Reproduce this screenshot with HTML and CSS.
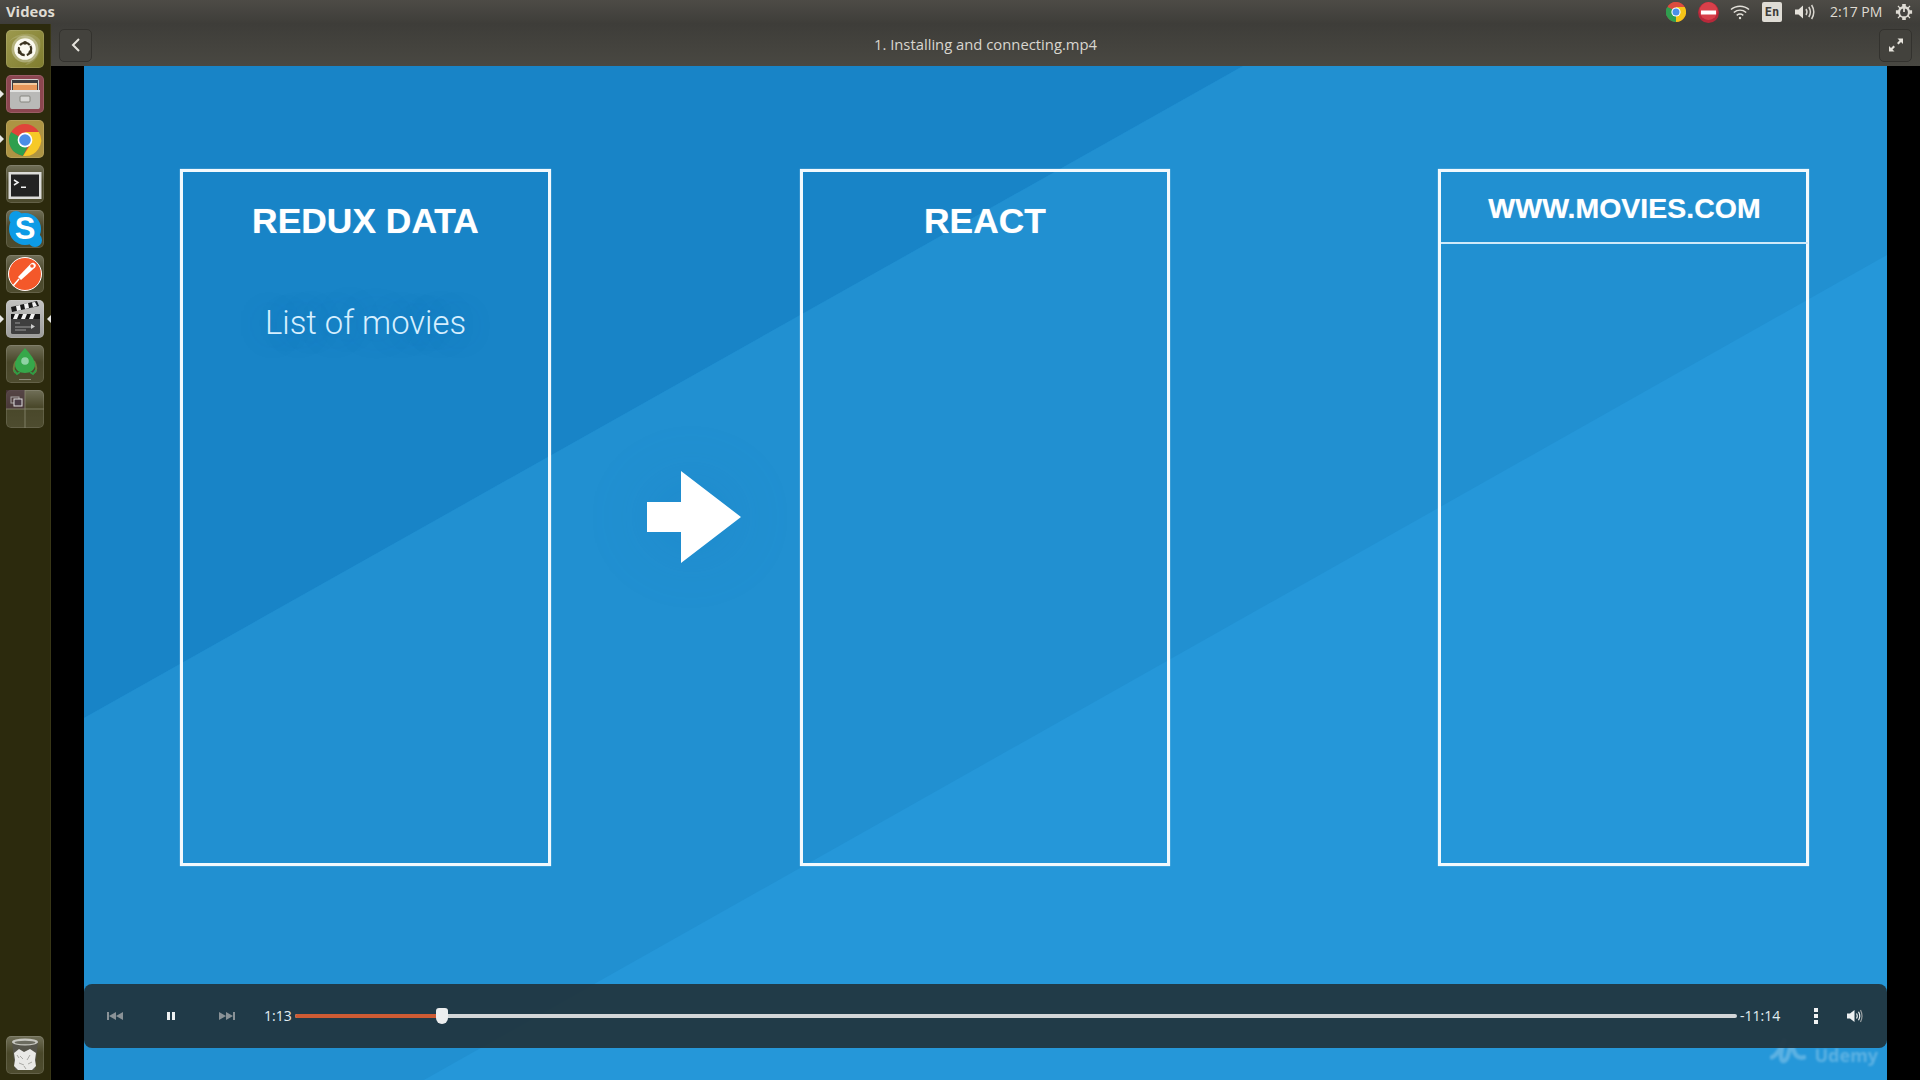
FILE: index.html
```html
<!DOCTYPE html>
<html lang="en">
<head>
<meta charset="utf-8">
<title>Videos</title>
<link rel="stylesheet" href="styles.css">
</head>
<body>
<header class="panel">
  <span class="app-name">Videos</span>
  <div class="indicators">
    <svg class="ind ind-chrome" viewBox="0 0 20 20"><circle cx="10" cy="10" r="10" fill="#dd4b3e"/><path d="M10 10 1.34 15 A10 10 0 0 1 1.34 5 L5 10Z" fill="#2f9e4f"/><path d="M1.34 5A10 10 0 0 0 10 20L15 11Z" fill="#2f9e4f"/><path d="M10 20A10 10 0 0 0 18.7 5H10Z" fill="#f5c518"/><path d="M1.6 4.6A10 10 0 0 1 18.7 5H10Z" fill="#dd4b3e"/><circle cx="10" cy="10" r="4.6" fill="#fff"/><circle cx="10" cy="10" r="3.5" fill="#4a8fe7"/></svg>
    <svg class="ind ind-stop" viewBox="0 0 21 21"><circle cx="10.500" cy="10.500" r="10.500" fill="#b8283a"/><circle cx="10.500" cy="9" r="9" fill="#d8404a"/><rect x="3" y="8.500" width="15" height="4" fill="#fff"/></svg>
    <svg class="ind ind-wifi" viewBox="0 0 20 16" fill="none" stroke="#e4e1da" stroke-width="1.500"><path d="M1 5.500C6 1 14 1 19 5.500"/><path d="M3.800 8.500C7.500 5.500 12.500 5.500 16.200 8.500"/><path d="M6.700 11.300C8.700 9.800 11.300 9.800 13.300 11.300"/><circle cx="10" cy="14" r="1.200" fill="#e4e1da" stroke="none"/></svg>
    <span class="ind-lang">En</span>
    <svg class="ind ind-vol" viewBox="0 0 21 16" fill="none" stroke="#d8d5ce" stroke-width="1.500"><path d="M0 5.500H3.500L8 1.500V14.500L3.500 10.500H0Z" fill="#e4e1da" stroke="none"/><path d="M11 5Q13 8 11 11"/><path d="M13.800 3Q17 8 13.800 13"/><path d="M16.600 1Q21 8 16.600 15"/></svg>
    <span class="clock">2:17 PM</span>
    <svg class="ind ind-gear" viewBox="0 0 20 20"><path d="M8 1H12V3.600L14.400 4.600 16.200 2.800 17.200 3.800 15.400 5.600 16.400 8H19V12H16.400L15.400 14.400 17.200 16.200 16.200 17.200 14.400 15.400 12 16.400V19H8V16.400L5.600 15.400 3.800 17.200 2.800 16.200 4.600 14.400 3.600 12H1V8H3.600L4.600 5.600 2.800 3.800 3.800 2.800 5.600 4.600 8 3.600Z" fill="#dedbd4"/><circle cx="10" cy="10.500" r="4.300" fill="#444340"/><rect x="9" y="4" width="2" height="6" fill="#dedbd4"/></svg>
  </div>
</header>

<div class="main">
  <nav class="launcher">
    <div class="tile tile-dash">
      <svg viewBox="0 0 38 38"><path d="M3 12C10 2 28 1 34 10 36 22 30 34 19 35 28 28 30 18 24 11 17 5 8 7 3 12Z" fill="#fff" opacity=".14"/><circle cx="19" cy="19" r="13.500" fill="#fff" opacity=".3"/><circle cx="19" cy="19" r="10.800" fill="#fbfaf0"/><circle cx="19" cy="19" r="6.200" fill="none" stroke="#3c3420" stroke-width="2.200" stroke-dasharray="11 2" transform="rotate(-30 19 19)"/><circle cx="19" cy="12.800" r="1.900" fill="#3c3420"/><circle cx="13.600" cy="22.100" r="1.900" fill="#3c3420"/><circle cx="24.400" cy="22.100" r="1.900" fill="#3c3420"/></svg>
    </div>
    <div class="tile tile-files pip-left">
      <svg viewBox="0 0 38 38"><rect x="5" y="4" width="28" height="30" rx="2" fill="#d3d3d0"/><rect x="6" y="5" width="26" height="11" fill="#3b3b3f"/><rect x="7" y="10" width="24" height="5" fill="#e8965a"/><rect x="7" y="8" width="24" height="2" fill="#f3c9a0"/><rect x="4" y="15" width="30" height="19" rx="2" fill="#b9b9b7"/><rect x="4" y="15" width="30" height="2" fill="#e2e2e0"/><rect x="14" y="21" width="10" height="6" rx="1" fill="#d8d8d6" stroke="#85857f"/></svg>
    </div>
    <div class="tile tile-chrome pip-left">
      <svg viewBox="0 0 38 38"><circle cx="19" cy="20" r="16" fill="#e0443a"/><path d="M5.100 12A16 16 0 0 0 17 35.900L24 22 12 16Z" fill="#2e9f4e"/><path d="M17 35.900A16 16 0 0 0 32.900 12H19L26 22Z" fill="#f6c927"/><circle cx="19" cy="20" r="7.400" fill="#fff"/><circle cx="19" cy="20" r="5.800" fill="#4b8de6"/></svg>
    </div>
    <div class="tile tile-term">
      <svg viewBox="0 0 38 38"><rect x="2.500" y="7" width="33" height="27" fill="#dcdcd9"/><rect x="5" y="9.500" width="28" height="22" fill="#222"/><path d="M8 15 12 17.500 8 20" fill="none" stroke="#f2f2f2" stroke-width="1.500"/><rect x="15" y="21.500" width="5" height="1.500" fill="#f2f2f2"/></svg>
    </div>
    <div class="tile tile-skype">
      <svg viewBox="0 0 38 38"><circle cx="10" cy="8" r="7" fill="#0d9be6"/><circle cx="29" cy="30" r="7" fill="#0d9be6"/><circle cx="19" cy="19" r="16" fill="#0d9be6"/></svg>
      <span class="skype-s">S</span>
    </div>
    <div class="tile tile-post">
      <svg viewBox="0 0 38 38"><circle cx="19" cy="19" r="16.500" fill="#f4582a" stroke="#fff" stroke-width="1"/><path d="M28 8C30 9 30.500 11 29 12.500L15 25 12 22 25 8.500C26 7.600 27 7.500 28 8Z" fill="#fff"/><path d="M13 24 7 31" stroke="#fff" stroke-width="1.500"/><circle cx="26" cy="11" r="1.800" fill="#f4582a"/></svg>
    </div>
    <div class="tile tile-video pip-left pip-right">
      <svg viewBox="0 0 38 38"><rect x="5" y="15" width="29" height="19" rx="1.500" fill="#3f3f3f"/><rect x="5" y="14" width="29" height="5" fill="#151515"/><path d="M9 14H13L11 19H7ZM17 14H21L19 19H15ZM25 14H29L27 19H23Z" fill="#f2f2f2"/><path d="M5 7 31 1 33 6 6 12Z" fill="#1a1a1a"/><path d="M10 6 14 5 15 10 11 11ZM18 4 22 3 23 8 19 9ZM26 2.500 29 2 31 6 27 7Z" fill="#f2f2f2"/><path d="M9 23H14M9 27H26M9 30H20" stroke="#9a9a9a" stroke-width="1"/><path d="M25 24 29 26.500 25 29Z" fill="#ccc"/></svg>
    </div>
    <div class="tile tile-rocket">
      <svg viewBox="0 0 38 38"><path d="M10 16C7 21 7 26 10 28M28 16C31 21 31 26 28 28" fill="none" stroke="#6f7a3d" stroke-width="2"/><path d="M19 3C24 9 29 14 29 20 29 25 24 28 19 28 14 28 9 25 9 20 9 14 14 9 19 3Z" fill="#36a84a"/><path d="M8 25 11 29 14 27M30 25 27 29 24 27" fill="none" stroke="#2f9e44" stroke-width="2"/><circle cx="19" cy="16" r="3.800" fill="#8fd3a4"/><rect x="13" y="34" width="12" height="1" fill="#8b8b78"/></svg>
    </div>
    <div class="tile tile-work">
      <svg viewBox="0 0 38 38"><rect x="0" y="0" width="19" height="19" fill="#4a333f" opacity=".7"/><path d="M19 0V38M0 19H38" stroke="#8c8a72" stroke-width=".8"/><rect x="5" y="7" width="8" height="6" fill="none" stroke="#aaa6a6"/><rect x="8" y="9" width="8" height="7" fill="#4a3c46" stroke="#e0dede"/></svg>
    </div>
    <div class="tile tile-trash">
      <svg viewBox="0 0 38 38"><path d="M6 5H32L29 34H9Z" fill="#55544a"/><ellipse cx="19" cy="6" rx="13" ry="3.400" fill="#c7c7c0"/><ellipse cx="19" cy="6.500" rx="10.500" ry="1.800" fill="#6b6b5f"/><path d="M8 17 13 13 18 16 24 13 30 17 29 24 30 30 26 34H12L8 30 9 24Z" fill="#e9e9e6"/><path d="M14 20 17 23M24 19 21 24M13 27 18 29M22 28 26 26M11 19 13 22M18 30 20 33" stroke="#a9a9a4"/></svg>
    </div>
  </nav>

  <div class="window">
    <div class="titlebar">
      <button class="tb-btn" type="button"><svg class="tb-icon" viewBox="0 0 12 14"><path d="M9 1 3 7 9 13" fill="none" stroke="#e6e3dc" stroke-width="2"/></svg></button>
      <span class="title">1. Installing and connecting.mp4</span>
      <button class="tb-btn" type="button"><svg class="tb-icon" viewBox="0 0 14 14" fill="#e6e3dc"><path d="M8.500 .5H14V6L12 4 9.500 6.500 8 5 10.500 2.500Z"/><path d="M5.500 13.500H0V8L2 10 4.500 7.500 6 9 3.500 11.500Z"/></svg></button>
    </div>
    <div class="content">
      <div class="stage">
        <svg class="backdrop" viewBox="0 0 1803 1014" preserveAspectRatio="none">
          <polygon points="1159,0 1803,0 1803,189 340,1014 0,1014 0,652" fill="#2190d1"/>
          <polygon points="0,0 1159,0 0,652" fill="#1884c7"/>
        </svg>
        <section class="box">
          <h2 class="box-title">REDUX DATA</h2>
          <p class="box-item">List of movies</p>
        </section>
        <div class="arrow-slot">
          <svg class="arrow" viewBox="0 0 94 92"><polygon points="0,31 34,31 34,0 94,46 34,92 34,61 0,61" fill="#fff"/></svg>
        </div>
        <section class="box box-mid">
          <h2 class="box-title">REACT</h2>
        </section>
        <div class="spacer"></div>
        <section class="box">
          <h2 class="site-title">WWW.MOVIES.COM</h2>
        </section>

        <div class="watermark">
          <svg class="wm-logo" viewBox="0 0 40 30" fill="none" stroke="#fff" stroke-width="5" stroke-linecap="round" stroke-linejoin="round"><path d="M2 22C9 20 14 6 16 3 12 12 10 28 16 26 22 24 20 10 24 10 27 10 25 25 38 22"/></svg>
          <span class="wm-text">Udemy</span>
        </div>

        <div class="controls">
          <svg class="ctl ctl-prev" viewBox="0 0 16 8" fill="#8a9297"><rect y="0" width="2" height="8"/><path d="M9 0V8L2 4ZM16 0V8L9 4Z"/></svg>
          <svg class="ctl ctl-pause" viewBox="0 0 8 8" fill="#eef1f2"><rect width="3" height="8"/><rect x="5" width="3" height="8"/></svg>
          <svg class="ctl ctl-next" viewBox="0 0 16 8" fill="#8a9297"><path d="M0 0V8L7 4ZM7 0V8L14 4Z"/><rect x="14" width="2" height="8"/></svg>
          <span class="time time-now">1:13</span>
          <div class="track">
            <div class="track-fill" style="width:10.2%"></div>
            <div class="thumb" style="left:10.2%"></div>
          </div>
          <span class="time time-left">-11:14</span>
          <div class="dots"><i></i><i></i><i></i></div>
          <svg class="ctl ctl-vol" viewBox="0 0 16 14" fill="none" stroke="#9aa0a3" stroke-width="1.200"><path d="M0 4.500H3L7.500 1V13L3 9.500H0Z" fill="#eef1f2" stroke="none"/><path d="M9.500 4.500Q11 7 9.500 9.500" stroke="#eef1f2"/><path d="M11.500 2.800Q14 7 11.500 11.200" stroke="#eef1f2"/><path d="M13.500 1Q16.500 7 13.500 13"/></svg>
        </div>
      </div>
    </div>
  </div>
</div>
</body>
</html>
```

FILE: styles.css
```css
* { box-sizing: border-box; }
html, body { margin: 0; padding: 0; }
body {
  width: 1920px;
  height: 1080px;
  overflow: hidden;
  display: flex;
  flex-direction: column;
  background: #000;
  font-family: "Open Sans", "Noto Sans", sans-serif;
}

/* top panel */
.panel {
  height: 24px;
  flex: none;
  display: flex;
  align-items: center;
  justify-content: space-between;
  padding-left: 6px;
  background: linear-gradient(#4d4b46, #3e3d39);
  color: #dfdbd2;
}
.app-name { font-size: 14.8px; font-weight: 700; line-height: 22px; margin-bottom: 2px; }
.indicators { display: flex; align-items: center; height: 24px; }
.ind { display: block; flex: none; }
.ind-chrome { width: 20px; height: 20px; }
.ind-stop { width: 21px; height: 21px; margin-left: 12px; }
.ind-wifi { width: 20px; height: 16px; margin-left: 11px; }
.ind-lang {
  width: 20px;
  height: 20px;
  margin-left: 12px;
  border-radius: 2px;
  background: #dfdcd5;
  color: #3c3b37;
  font-family: "DejaVu Sans Mono", monospace;
  font-size: 12px;
  font-weight: 700;
  line-height: 20px;
  text-align: center;
}
.ind-vol { width: 21px; height: 16px; margin-left: 13px; }
.clock {
  margin: 0 0 1px 14px;
  width: 52px;
  font-size: 14px;
  line-height: 22px;
  color: #dfdbd2;
  white-space: nowrap;
}
.ind-gear { width: 18px; height: 18px; margin-left: 13px; margin-right: 7px; }

/* layout */
.main { flex: 1; display: flex; min-height: 0; }

/* launcher */
.launcher {
  width: 51px;
  flex: none;
  display: flex;
  flex-direction: column;
  gap: 7px;
  padding: 6px 0 6px 6px;
  background: #2c2a0d;
  border-right: 1px solid #383616;
}
.tile {
  position: relative;
  width: 38px;
  height: 38px;
  flex: none;
  border-radius: 5px;
  background: linear-gradient(rgba(255,255,255,.28), rgba(255,255,255,.08) 45%, rgba(255,255,255,.1)), #3a3818;
  box-shadow: inset 0 0 0 1px rgba(255,255,255,.12);
}
.tile svg { display: block; width: 38px; height: 38px; }
.tile-dash { background: linear-gradient(135deg, #9d9a4e, #7f7c2e); }
.tile-files { background: #8c4650; }
.tile-chrome { background: #ad9443; }
.tile-video { background: linear-gradient(#c2c2c0, #9c9c9a); }
.tile-trash { margin-top: auto; }
.tile-skype { overflow: hidden; }
.skype-s {
  position: absolute;
  inset: 0;
  color: #fff;
  font-family: "Liberation Sans", sans-serif;
  font-size: 31px;
  font-weight: 700;
  line-height: 38px;
  text-align: center;
}
.pip-left::before, .pip-right::after {
  content: "";
  position: absolute;
  top: 15px;
  border: 4px solid transparent;
}
.pip-left::before { left: -6px; border-left: 4px solid #e8e8e4; }
.pip-right::after { right: -7px; border-right: 4px solid #e8e8e4; }

/* window */
.window { flex: 1; display: flex; flex-direction: column; min-width: 0; }
.titlebar {
  height: 42px;
  flex: none;
  display: flex;
  align-items: center;
  padding: 0 8px;
  background: linear-gradient(#3e3d39, #494842);
}
.tb-btn {
  width: 33px;
  height: 33px;
  flex: none;
  display: flex;
  align-items: center;
  justify-content: center;
  padding: 0;
  border: 1px solid #33322e;
  border-radius: 5px;
  background: #43423d;
}
.tb-icon { width: 14px; height: 14px; display: block; }
.title {
  flex: 1;
  margin-bottom: 2px;
  text-align: center;
  font-size: 14.8px;
  color: #d9d6cf;
}

/* video */
.content { flex: 1; display: flex; padding: 0 33px; background: #000; min-height: 0; }
.stage {
  position: relative;
  flex: 1;
  display: flex;
  align-items: flex-start;
  padding: 103px 0 0 96px;
  background: #2597d9;
  overflow: hidden;
  font-family: "Liberation Sans", Arial, sans-serif;
}
.backdrop { position: absolute; inset: 0; width: 100%; height: 100%; }
.box {
  position: relative;
  width: 371px;
  height: 697px;
  flex: none;
  border: 3px solid #f2f9fd;
  box-shadow: 0 0 1px rgba(255,255,255,.7);
  color: #fff;
  text-align: center;
}
.box-mid { width: 370px; }
.box-title {
  margin: 0;
  padding-top: 29px;
  font-size: 35.4px;
  line-height: 40px;
  font-weight: 700;
  text-shadow: 0 0 1px rgba(255,255,255,.5);
}
.box-item {
  margin: 0;
  padding-top: 62px;
  font-family: Roboto, sans-serif;
  font-weight: 300;
  font-size: 32.800px;
  line-height: 40px;
  color: #d6efff;
  text-shadow: 0 0 30px rgba(20,110,180,.35);
}
.site-title {
  margin: 0 -2px 0 0;
  height: 72px;
  border-bottom: 2px solid #cfe9f9;
  font-size: 28.500px;
  line-height: 73px;
  font-weight: 700;
  text-shadow: 0 0 1px rgba(255,255,255,.5);
}
.arrow-slot { width: 249px; flex: none; padding: 302px 0 0 96px; }
.arrow { display: block; width: 94px; height: 92px; filter: drop-shadow(0 0 30px rgba(20,110,180,.22)); }
.spacer { width: 268px; flex: none; }

/* watermark */
.watermark {
  position: absolute;
  right: 9px;
  bottom: 14px;
  display: flex;
  align-items: flex-end;
  gap: 8px;
  opacity: .25;
  filter: blur(1px);
  color: #fff;
}
.wm-logo { width: 36px; height: 30px; display: block; }
.wm-text { font-family: "Noto Sans", sans-serif; font-size: 18px; font-weight: 700; line-height: 22px; }

/* controls */
.controls {
  position: absolute;
  left: 0;
  right: 0;
  bottom: 32px;
  height: 64px;
  display: flex;
  align-items: center;
  padding-left: 23px;
  border-radius: 8px;
  background: rgba(33, 54, 64, .95);
  font-family: "Open Sans", sans-serif;
}
.ctl { display: block; flex: none; }
.ctl-prev, .ctl-next { width: 16px; height: 8px; }
.ctl-pause { width: 8px; height: 8px; margin: 0 44px; }
.time { font-size: 14px; color: #e3eef3; white-space: nowrap; flex: none; margin-bottom: 2px; }
.time-now { margin-left: 29px; width: 31px; }
.time-left { margin-left: 3px; width: 44px; }
.track {
  position: relative;
  flex: 1;
  height: 4px;
  background: #d3d6d8;
  border-radius: 2px;
}
.track-fill { height: 100%; background: #cd5b34; border-radius: 2px 0 0 2px; }
.thumb {
  position: absolute;
  top: -6px;
  width: 12px;
  height: 16px;
  margin-left: -6px;
  border-radius: 3px 3px 6px 6px;
  background: #eceeef;
}
.dots {
  display: flex;
  flex-direction: column;
  gap: 2px;
  margin-left: 30px;
  width: 4px;
  flex: none;
}
.dots i { display: block; width: 4px; height: 4px; background: #f0f2f3; }
.ctl-vol { width: 16px; height: 14px; margin-left: 29px; margin-right: 24px; }
```
